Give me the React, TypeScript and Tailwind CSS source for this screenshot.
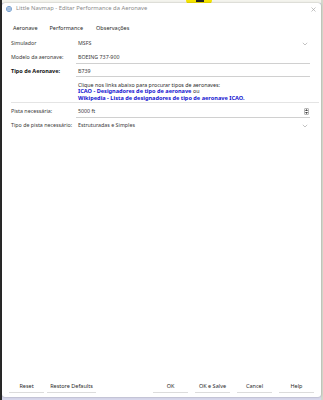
import React from "react";

const font = { fontFamily: '"Noto Sans", "Open Sans", sans-serif' };

function Chevron() {
  return (
    <svg width="6" height="4" viewBox="0 0 6 4" className="shrink-0">
      <path d="M0.8 0.8 L3 3 L5.2 0.8" fill="none" stroke="#9a9a9a" strokeWidth="0.6" />
    </svg>
  );
}

function Spinner() {
  return (
    <div className="w-[5px] h-[7px] border border-[#b8b8b8] rounded-[1px] flex flex-col items-center justify-center gap-[1px]">
      <svg width="3" height="2" viewBox="0 0 3 2"><path d="M0 2 L1.5 0 L3 2Z" fill="#444" /></svg>
      <svg width="3" height="2" viewBox="0 0 3 2"><path d="M0 0 L1.5 2 L3 0Z" fill="#444" /></svg>
    </div>
  );
}

function Btn({ label, w = "w-[35px]" }: { label: string; w?: string }) {
  return (
    <div className={`${w} h-[11px] flex items-center justify-center border-b border-[#dcdcdc] text-[5.5px] text-[#2a2a2a]`}>
      {label}
    </div>
  );
}

export default function App() {
  return (
    <div className="relative w-[323px] h-[400px] bg-[#d8d8ec] overflow-hidden" style={font}>
      {/* desktop background pieces */}
      <div className="absolute left-0 top-0 w-[323px] h-[3px] bg-[#f4f4ee]" />
      <div className="absolute left-[186px] top-0 w-[26px] h-[4px] rounded-b-full bg-[#f5e400]" />
      <div className="absolute left-[196px] top-0 w-[8px] h-[2px] bg-[#222]" />
      <div className="absolute left-0 top-0 w-[2px] h-[400px] bg-[#2a2a2a]" />
      <div className="absolute right-0 top-0 w-[2px] h-[400px] bg-[#d4d8cc]" />

      <div className="absolute left-[2px] top-[3px] w-[319px] h-[394px] bg-white rounded-[3px] shadow-[0_0_2px_rgba(0,0,0,0.35)] flex flex-col">
        {/* title bar */}
        <div className="h-[12px] flex items-center pl-[4px] pr-[5px]">
          <svg width="6" height="6" viewBox="0 0 12 12" className="shrink-0">
            <circle cx="6" cy="6" r="5.3" fill="#dbe7f5" stroke="#4c7fbf" strokeWidth="1.2" />
            <path d="M1 6 H11 M6 1 C3 4 3 8 6 11 M6 1 C9 4 9 8 6 11" stroke="#4c7fbf" strokeWidth="0.9" fill="none" />
          </svg>
          <span className="ml-[4px] text-[5.8px] text-[#8a8a8a] leading-none whitespace-nowrap">
            Little Navmap - Editar Performance da Aeronave
          </span>
          <div className="flex-1" />
          <svg width="5" height="5" viewBox="0 0 5 5">
            <path d="M0.5 0.5 L4.5 4.5 M4.5 0.5 L0.5 4.5" stroke="#9a9a9a" strokeWidth="0.6" />
          </svg>
        </div>

        {/* tabs */}
        <div className="mt-[9px] h-[10px] flex items-center pl-[11px] text-[5.5px] text-[#2a2a2a] leading-none">
          <span>Aeronave</span>
          <span className="ml-[12px]">Performance</span>
          <span className="ml-[13px]">Observações</span>
        </div>

        {/* form */}
        <div className="mt-[3px] pl-[9px] pr-[11px] text-[5.3px] text-[#3a3a3a] leading-none">
          <div className="h-[14px] flex items-center">
            <span className="w-[67px]">Simulador</span>
            <span className="flex-1">MSFS</span>
            <div className="mr-[2px]"><Chevron /></div>
          </div>
          <div className="h-[14px] flex items-center">
            <span className="w-[67px]">Modelo da aeronave:</span>
            <div className="flex-1 h-[11px] flex items-center border-b border-[#d0d0d0] -ml-[2px] pl-[2px]">
              BOEING 737-900
            </div>
          </div>
          <div className="h-[14px] flex items-center">
            <span className="w-[67px] font-bold text-[5.5px] text-[#111]">Tipo de Aeronave:</span>
            <div className="flex-1 h-[10px] flex items-center border-b border-[#d0d0d0] -ml-[2px] pl-[2px]">
              B739
            </div>
          </div>
          <div className="pl-[67px] pt-[2.5px] leading-[6.5px]">
            <div className="text-[#2a2a2a] text-[5.3px]">Clique nos links abaixo para procurar tipos de aeronaves:</div>
            <div className="text-[5.6px]">
              <span className="font-bold text-[#1515d0]">ICAO - Designadores de tipo de aeronave</span>{" "}
              <span className="text-[#2a2a2a] text-[5.3px]">ou</span>
            </div>
            <div className="font-bold text-[5.6px] text-[#1515d0]">Wikipedia - Lista de designadores de tipo de aeronave ICAO.</div>
          </div>
          <div className="mt-[1px] h-0 border-t border-[#e4e4e4] -mr-[9px]" />
          <div className="mt-[2px] h-[14px] flex items-center">
            <span className="w-[67px]">Pista necessária:</span>
            <div className="flex-1 h-[11px] flex items-center border-b border-[#d0d0d0] -ml-[2px] pl-[2px]">
              <span className="flex-1">5000 ft</span>
              <div className="mr-[1px]"><Spinner /></div>
            </div>
          </div>
          <div className="h-[14px] flex items-center">
            <span className="w-[67px]">Tipo de pista necessário:</span>
            <span className="flex-1">Estruturadas e Simples</span>
            <div className="mr-[2px]"><Chevron /></div>
          </div>
        </div>

        <div className="flex-1" />

        {/* buttons */}
        <div className="mb-[4px] h-[12px] flex items-center pl-[7px] pr-[7px]">
          <Btn label="Reset" />
          <div className="ml-[3px]"><Btn label="Restore Defaults" w="w-[49px]" /></div>
          <div className="flex-1" />
          <Btn label="OK" />
          <div className="ml-[7px]"><Btn label="OK e Salve" /></div>
          <div className="ml-[7px]"><Btn label="Cancel" /></div>
          <div className="ml-[7px]"><Btn label="Help" /></div>
        </div>
      </div>
    </div>
  );
}
